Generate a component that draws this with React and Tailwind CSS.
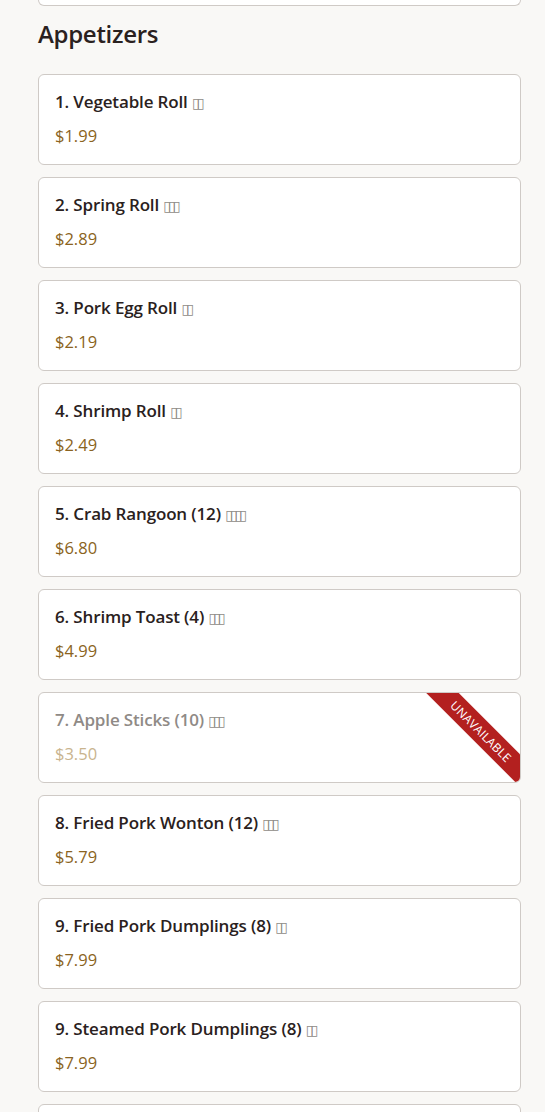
import React from 'react'

const items = [
  { name: '1. Vegetable Roll', zh: 2, price: '$1.99' },
  { name: '2. Spring Roll', zh: 3, price: '$2.89' },
  { name: '3. Pork Egg Roll', zh: 2, price: '$2.19' },
  { name: '4. Shrimp Roll', zh: 2, price: '$2.49' },
  { name: '5. Crab Rangoon (12)', zh: 4, price: '$6.80' },
  { name: '6. Shrimp Toast (4)', zh: 3, price: '$4.99' },
  { name: '7. Apple Sticks (10)', zh: 3, price: '$3.50', unavailable: true },
  { name: '8. Fried Pork Wonton (12)', zh: 3, price: '$5.79' },
  { name: '9. Fried Pork Dumplings (8)', zh: 2, price: '$7.99' },
  { name: '9. Steamed Pork Dumplings (8)', zh: 2, price: '$7.99' },
]

const MenuCard = ({ item }) => {
  const off = item.unavailable
  return (
    <div className="relative overflow-hidden rounded-md border border-[#cfcac6] bg-white px-4 py-4">
      <div className={`text-[17px] leading-[22px] font-semibold tracking-[-0.15px] ${off ? 'text-[#8f8a86]' : 'text-[#2a2120]'}`}>
        {item.name}{' '}
        <span className="font-['DejaVu_Sans',sans-serif] text-[14px] leading-none font-normal tracking-[-3px] text-[#8f8b87]">
          {'▯'.repeat(item.zh)}
        </span>
      </div>
      <div className={`mt-[11px] text-[16.5px] leading-6 ${off ? 'text-[#c9b48e]' : 'text-[#8a6321]'}`}>
        {item.price}
      </div>
      {off && (
        <div className="absolute top-[27px] right-[-31px] flex h-[23px] w-[140px] rotate-45 items-center justify-center bg-[#b3201f] text-[12px] tracking-[0.2px] text-white">
          UNAVAILABLE
        </div>
      )}
    </div>
  )
}

const App = () => {
  return (
    <div className="min-h-screen bg-[#f9f8f6] font-['Open_Sans',sans-serif]">
      <div className="ml-[38px] mr-[24px] pb-8">
        {/* tail of the previous section's last card */}
        <div className="h-[6px] rounded-b-md border border-t-0 border-[#cfcac6] bg-white" />

        <h2 className="mt-[12px] mb-[24px] text-[24px] leading-8 font-semibold tracking-[-0.3px] text-[#2a2120]">
          Appetizers
        </h2>

        <div className="flex flex-col gap-3">
          {items.map((item, i) => (
            <MenuCard key={i} item={item} />
          ))}
          <div className="h-[91px] rounded-md border border-[#cfcac6] bg-white" />
        </div>
      </div>
    </div>
  )
}

export default App
